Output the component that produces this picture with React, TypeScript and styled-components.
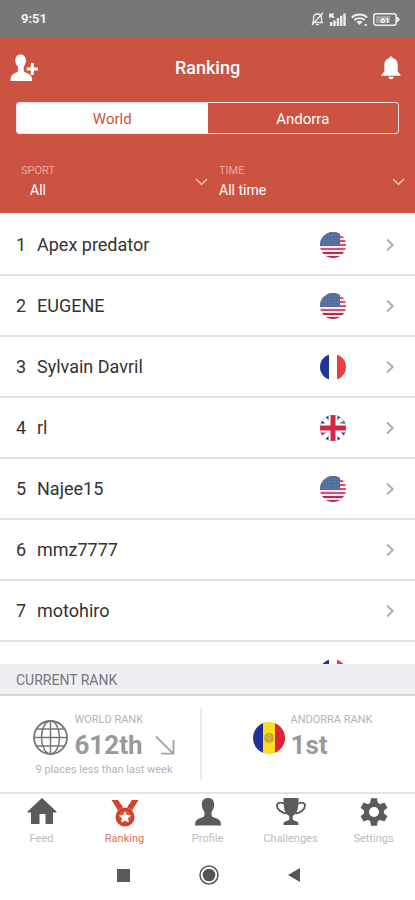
import React, { useState } from "react";
import styled, { createGlobalStyle } from "styled-components";

const RED = "#cc5341";

const GlobalStyle = createGlobalStyle`
  *, *::before, *::after { box-sizing: border-box; }
  body {
    margin: 0;
    background: #fff;
    font-family: Roboto, "Liberation Sans", sans-serif;
    color: #333;
  }
  button, select { font: inherit; color: inherit; border: 0; background: none; padding: 0; margin: 0; }
  svg { display: block; flex: none; }
`;

const Screen = styled.div`
  display: flex;
  flex-direction: column;
  height: 100vh;
  overflow: hidden;
`;

const StatusBar = styled.div`
  display: flex;
  align-items: center;
  justify-content: space-between;
  height: 38px;
  flex: none;
  padding: 0 15px 0 21px;
  background: #777;
  color: #f0f0f0;
`;

const Clock = styled.time`
  font-size: 13px;
  font-weight: 700;
  line-height: 16px;
`;

const StatusIcons = styled.div`
  display: flex;
  align-items: center;
  gap: 5px;
`;

const Header = styled.header`
  flex: none;
  background: ${RED};
  color: #fff;
`;

const TitleBar = styled.div`
  display: grid;
  grid-template-columns: 32px 1fr 32px;
  align-items: center;
  height: 64px;
  padding: 0 8px 4px;
`;

const Title = styled.h1`
  margin: 0;
  font-size: 18px;
  font-weight: 500;
  line-height: 24px;
  text-align: center;
`;

const IconButton = styled.button`
  display: flex;
  align-items: center;
  justify-content: center;
  height: 32px;
  cursor: pointer;
`;

const Segments = styled.div`
  display: grid;
  grid-template-columns: 1fr 1fr;
  height: 32px;
  margin: 0 16px;
  border: 1px solid #fbe4df;
  border-radius: 3px;
  overflow: hidden;
`;

const Segment = styled.button<{ $active: boolean }>`
  padding-top: 2px;
  font-size: 15px;
  line-height: 20px;
  background: ${(p) => (p.$active ? "#fff" : "transparent")};
  color: ${(p) => (p.$active ? RED : "#fff")};
  cursor: pointer;
`;

const Filters = styled.div`
  display: grid;
  grid-template-columns: 1fr 1fr;
  padding: 29px 10px 13px 21px;
`;

const Filter = styled.div`
  display: flex;
  align-items: center;
  justify-content: space-between;
  padding-right: 5px;

  & + & {
    padding-left: 6px;
    padding-right: 0;
  }
`;

const FilterField = styled.div`
  display: flex;
  flex-direction: column;
  flex: 1;
`;

const FilterLabel = styled.label`
  font-size: 11px;
  line-height: 16px;
  color: #eba99d;
`;

const FilterSelect = styled.select<{ $indented?: boolean }>`
  appearance: none;
  width: 100%;
  height: 21px;
  padding-left: ${(p) => (p.$indented ? 9 : 0)}px;
  font-size: 14px;
  line-height: 20px;
  color: #fff;
  cursor: pointer;
`;

const List = styled.ol`
  flex: 1;
  min-height: 0;
  margin: 0;
  padding: 2px 0 0;
  list-style: none;
  overflow: hidden;
`;

const Row = styled.li`
  height: 61px;
  border-bottom: 2px solid #e2e2e2;
`;

const RowButton = styled.button`
  display: grid;
  grid-template-columns: 21px 1fr 28px 47px;
  align-items: center;
  width: 100%;
  height: 100%;
  padding: 0 20px 0 16px;
  text-align: left;
  font-size: 18px;
  line-height: 24px;
  cursor: pointer;
`;

const RowArrow = styled.span`
  display: flex;
  justify-content: flex-end;
`;

const FlagDisc = styled.span<{ $size: number }>`
  display: block;
  flex: none;
  width: ${(p) => p.$size}px;
  height: ${(p) => p.$size}px;
  border-radius: 50%;
  overflow: hidden;
`;

const SectionTitle = styled.h2`
  flex: none;
  margin: 0;
  padding: 1px 16px 0;
  height: 32px;
  border-bottom: 2px solid #d6d5da;
  background: #efeef3;
  font-size: 14px;
  font-weight: 400;
  line-height: 31px;
  color: #77767b;
`;

const Ranks = styled.section`
  display: grid;
  grid-template-columns: 202fr 213fr;
  flex: none;
  height: 96px;
  padding: 12px 0;
`;

const RankCard = styled.div`
  display: flex;
  flex-direction: column;
  align-items: center;
  padding-left: 8px;

  &:first-child { border-right: 2px solid #ececec; }
`;

const RankBody = styled.div`
  display: flex;
  align-items: center;
  gap: 6px;
`;

const RankLabel = styled.div`
  font-size: 11px;
  line-height: 12px;
  padding-top: 6px;
  color: #b3b3b3;
`;

const RankValue = styled.div`
  display: flex;
  align-items: center;
  gap: 12px;
  font-size: 26px;
  font-weight: 700;
  line-height: 38px;
  color: #999;
`;

const RankIcon = styled.div`
  padding-top: 3px;
`;

const RankNote = styled.div`
  font-size: 11px;
  line-height: 12px;
  color: #b3b3b3;
`;

const TabBar = styled.nav`
  display: grid;
  grid-template-columns: repeat(5, 1fr);
  flex: none;
  height: 58px;
  border-top: 2px solid #e4e4e4;
`;

const Tab = styled.button<{ $active: boolean }>`
  display: flex;
  flex-direction: column;
  align-items: center;
  gap: 5px;
  padding-top: 3px;
  font-size: 11px;
  line-height: 14px;
  color: ${(p) => (p.$active ? "#d9735f" : "#bcbcbc")};
  cursor: pointer;
`;

const SystemBar = styled.div`
  display: flex;
  align-items: center;
  justify-content: center;
  gap: 61px;
  flex: none;
  height: 50px;
  padding-left: 2px;
`;

const SystemButton = styled.button`
  display: flex;
  align-items: center;
  justify-content: center;
  width: 24px;
  height: 24px;
  cursor: pointer;
`;

type Country = "us" | "fr" | "gb" | "ad";

function FlagArt({ country }: { country: Country }) {
  if (country === "us") {
    return (
      <svg width="100%" height="100%" viewBox="0 0 26 26" aria-label="United States">
        <rect width="26" height="26" fill="#f7e6ea" />
        {[0, 4, 8, 12, 16, 20, 24].map((y) => (
          <rect key={y} y={y} width="26" height="2" fill={y > 18 ? "#b82a50" : "#cf5472"} />
        ))}
        <rect width="20" height="14" fill="#4f6c9c" />
        {[3, 6, 9, 12].map((y) =>
          [3, 6, 9, 12, 15, 18].map((x) => (
            <circle key={`${x}-${y}`} cx={x} cy={y} r="0.5" fill="#8ea3c4" />
          ))
        )}
      </svg>
    );
  }
  if (country === "fr") {
    return (
      <svg width="100%" height="100%" viewBox="0 0 26 26" aria-label="France">
        <rect width="26" height="26" fill="#fff" />
        <rect width="9" height="26" fill="#1c3798" />
        <rect x="17" width="9" height="26" fill="#ee3d42" />
      </svg>
    );
  }
  if (country === "gb") {
    return (
      <svg width="100%" height="100%" viewBox="0 0 26 26" aria-label="United Kingdom">
        <rect width="26" height="26" fill="#1f3488" />
        <path d="M0 0L26 26M26 0L0 26" stroke="#fff" strokeWidth="5" />
        <path d="M26 5L18 10M0 21L8 16" stroke="#e0607a" strokeWidth="1.6" />
        <path d="M13 0V26M0 13H26" stroke="#fff" strokeWidth="9" />
        <path d="M13 0V26M0 13H26" stroke="#d22743" strokeWidth="5" />
      </svg>
    );
  }
  return (
    <svg width="100%" height="100%" viewBox="0 0 32 32" aria-label="Andorra">
      <rect width="32" height="32" fill="#fbdc20" />
      <rect width="10" height="32" fill="#1f2f9c" />
      <rect x="22" width="10" height="32" fill="#dc2341" />
      <circle cx="16" cy="16" r="5" fill="#cfa43c" />
      <path d="M16 12v8M12.400 16h7.200" stroke="#e0b53f" strokeWidth="1" />
    </svg>
  );
}

function Flag({ country, size = 26 }: { country: Country; size?: number }) {
  return (
    <FlagDisc $size={size}>
      <FlagArt country={country} />
    </FlagDisc>
  );
}

const AddPersonIcon = () => (
  <svg width="28" height="28" viewBox="0 0 28 28" fill="#fff" aria-hidden="true">
    <path d="M10.500 0.500c3.500 0 5.400 2.400 5.400 5.900c0 2.600-.9 4.700-2.100 6.100v4.200c0 1 .8 1.500 3 2.400c3.600 1.500 5.400 3.400 5.400 8H.5c0-4.600 1.200-6.500 4.600-8c2.200-.9 2.800-1.400 2.800-2.400v-4.200C6.500 11.100 5.300 9 5.300 6.400C5.300 2.900 7.200.5 10.500.5z" />
    <path d="M20.800 9h3v4.500H28v3h-4.200V21h-3v-4.500H16.800v-3h4z" />
  </svg>
);

const BellIcon = () => (
  <svg width="20" height="24" viewBox="0 0 20 24" fill="#fff" aria-hidden="true">
    <path d="M10 0.500c1 0 1.600.6 1.700 1.500c3.300.8 5 3.500 5 7v6.500l2.800 3.200v1H.5v-1l2.800-3.200V9c0-3.500 1.700-6.200 5-7C8.400 1.100 9 .5 10 .5z" />
    <path d="M7.500 20.800h5c0 1.500-1 2.500-2.500 2.500s-2.500-1-2.500-2.500z" />
  </svg>
);

const MutedIcon = () => (
  <svg width="13" height="14" viewBox="0 0 13 14" fill="none" stroke="#eee" strokeWidth="1.300" aria-hidden="true">
    <path d="M2.500 10V6c0-2.500 1.500-4 4-4s4 1.500 4 4v4M1 10.500h11M5 12.600h3M12 .8L1 13" />
  </svg>
);

const SignalIcon = () => (
  <svg width="17" height="13" viewBox="0 0 17 13" fill="#eee" aria-hidden="true">
    <path d="M1 9h2.400v4H1zM4.300 7.500h2.400V13H4.300zM7.700 5h2.400v8H7.700zM11 2.800h2.400V13H11zM14.300 .5h2.400V13h-2.400z" />
    <path d="M0 .5h5.500L3.800 2.200L5.500 4L4 5.500L2.200 3.800L.5 5.500z" />
  </svg>
);

const WifiIcon = () => (
  <svg width="17" height="13" viewBox="0 0 17 13" fill="none" stroke="#eee" strokeWidth="1.800" aria-hidden="true">
    <path d="M.8 4.500c4-4 11.400-4 15.400 0M3.300 7c2.800-2.600 7.600-2.600 10.400 0" />
    <path d="M5.500 8.800c1.700-1.400 4.300-1.400 6 0L8.500 12z" fill="#eee" stroke="none" />
    <path d="M13.500 12h2.500" />
  </svg>
);

const BatteryIcon = () => (
  <svg width="27" height="13" viewBox="0 0 27 13" aria-hidden="true">
    <rect x=".8" y=".8" width="22.400" height="11.400" rx="2.500" fill="none" stroke="#eee" strokeWidth="1.500" />
    <path d="M24.400 4l2 2.500l-2 2.500z" fill="#eee" stroke="#eee" />
    <rect x="3" y="3" width="14" height="7" fill="#a2a2a2" />
    <text x="12" y="9.500" fontSize="8" fontWeight="700" fill="#fff" textAnchor="middle">61</text>
  </svg>
);

const ChevronDown = () => (
  <svg width="13" height="8" viewBox="0 0 13 8" fill="none" stroke="#f2beb4" strokeWidth="1.600" aria-hidden="true">
    <path d="M1 1l5.500 5.300L12 1" />
  </svg>
);

const ChevronRight = () => (
  <svg width="10" height="14" viewBox="0 0 10 14" fill="none" stroke="#adadad" strokeWidth="1.900" aria-hidden="true">
    <path d="M2 1.500l5.700 5.500L2 12.500" />
  </svg>
);

const GlobeIcon = () => (
  <svg width="35" height="35" viewBox="0 0 35 35" fill="none" stroke="#777" strokeWidth="1.500" aria-hidden="true">
    <circle cx="17.500" cy="17.500" r="16.500" strokeWidth="1.800" />
    <ellipse cx="17.500" cy="17.500" rx="9" ry="16.500" />
    <path d="M17.500 1v33M1 17.500h33M4 9h27M4 26h27" />
  </svg>
);

const DownArrow = () => (
  <svg width="20" height="20" viewBox="0 0 20 20" fill="none" stroke="#a3a3a3" strokeWidth="1.800" aria-hidden="true">
    <path d="M1 1.500L18 18.300M18.500 5v13.700H6" />
  </svg>
);

const HomeIcon = () => (
  <svg width="30" height="30" viewBox="0 0 30 30" fill="#5b5b5d" aria-hidden="true">
    <path d="M15 1L29.500 14.500v1H26V27h-7.500V17h-6V27H4V15.500H.5v-1z" />
  </svg>
);

const MedalIcon = () => (
  <svg width="30" height="30" viewBox="0 0 30 30" aria-hidden="true">
    <path d="M1.500 3H8l5 7.200l-5 3.200zM28.500 3H22l-5 7.200l5 3.200z" fill="#d4452a" />
    <circle cx="15" cy="20" r="8" fill="#d9553b" stroke="#cf3f25" strokeWidth="3" />
    <path d="M15 14l1.900 3.900l4.200.5l-3.100 2.900l.8 4.200l-3.800-2.100l-3.800 2.100l.8-4.200l-3.100-2.900l4.200-.5z" fill="#fff" />
  </svg>
);

const ProfileIcon = () => (
  <svg width="30" height="30" viewBox="-1 -1 30 30" fill="#5b5b5d" aria-hidden="true">
    <path d="M14 0c4 0 6.200 2.600 6.200 6.600c0 3-1.100 5.500-2.600 7.200v3.400c0 1.200 1 1.700 3.400 2.600c4 1.500 6 2.800 6 7.700H1c0-4.900 2-6.200 6-7.700c2.400-.9 3.400-1.400 3.400-2.600v-3.400C8.900 12.100 7.800 9.600 7.800 6.600C7.800 2.600 10 0 14 0z" />
  </svg>
);

const TrophyIcon = () => (
  <svg width="30" height="30" viewBox="0 0 30 30" fill="#5b5b5d" aria-hidden="true">
    <path d="M7.500 1h15v2c0 9-1.500 13.500-5.800 16v3.500c1 1.500 5.800 1.500 5.800 4V28h-15v-1.500c0-2.500 4.800-2.500 5.800-4V19C9 16.500 7.500 12 7.500 3z" />
    <path d="M8 6.500C4.500 5 1 5.500 1 8.500c0 4 4.500 7.500 9.500 8M22 6.500c3.500-1.500 7-1 7 2c0 4-4.500 7.500-9.500 8" fill="none" stroke="#5b5b5d" strokeWidth="1.900" />
  </svg>
);

const GearIcon = () => (
  <svg width="30" height="30" viewBox="0 0 30 30" aria-hidden="true">
    <g fill="#5b5b5d">
      {[0, 60, 120].map((a) => (
        <path key={a} d="M12 1.200h6l.8 5v17.600l-.8 5h-6l-.8-5V6.200z" transform={`rotate(${a} 15 15)`} />
      ))}
      <circle cx="15" cy="15" r="10" />
    </g>
    <circle cx="15" cy="15" r="5" fill="#fff" />
  </svg>
);

const players: { rank?: number; name?: string; country?: Country }[] = [
  { rank: 1, name: "Apex predator", country: "us" },
  { rank: 2, name: "EUGENE", country: "us" },
  { rank: 3, name: "Sylvain Davril", country: "fr" },
  { rank: 4, name: "rl", country: "gb" },
  { rank: 5, name: "Najee15", country: "us" },
  { rank: 6, name: "mmz7777" },
  { rank: 7, name: "motohiro" },
  { country: "fr" },
];

const tabs = [
  { label: "Feed", Icon: HomeIcon },
  { label: "Ranking", Icon: MedalIcon },
  { label: "Profile", Icon: ProfileIcon },
  { label: "Challenges", Icon: TrophyIcon },
  { label: "Settings", Icon: GearIcon },
];

export default function App() {
  const [scope, setScope] = useState("World");
  const [tab, setTab] = useState("Ranking");

  return (
    <>
      <GlobalStyle />
      <Screen>
        <StatusBar>
          <Clock>9:51</Clock>
          <StatusIcons>
            <MutedIcon />
            <SignalIcon />
            <WifiIcon />
            <BatteryIcon />
          </StatusIcons>
        </StatusBar>

        <Header>
          <TitleBar>
            <IconButton aria-label="Add friend"><AddPersonIcon /></IconButton>
            <Title>Ranking</Title>
            <IconButton aria-label="Notifications"><BellIcon /></IconButton>
          </TitleBar>
          <Segments>
            {["World", "Andorra"].map((s) => (
              <Segment key={s} $active={s === scope} aria-pressed={s === scope} onClick={() => setScope(s)}>
                {s}
              </Segment>
            ))}
          </Segments>
          <Filters>
            <Filter>
              <FilterField>
                <FilterLabel htmlFor="sport">SPORT</FilterLabel>
                <FilterSelect id="sport" $indented><option>All</option></FilterSelect>
              </FilterField>
              <ChevronDown />
            </Filter>
            <Filter>
              <FilterField>
                <FilterLabel htmlFor="time">TIME</FilterLabel>
                <FilterSelect id="time"><option>All time</option></FilterSelect>
              </FilterField>
              <ChevronDown />
            </Filter>
          </Filters>
        </Header>

        <List>
          {players.map((p, i) => (
            <Row key={i}>
              <RowButton>
                <span>{p.rank}</span>
                <span>{p.name}</span>
                <span>{p.country && <Flag country={p.country} />}</span>
                <RowArrow><ChevronRight /></RowArrow>
              </RowButton>
            </Row>
          ))}
        </List>

        <SectionTitle>CURRENT RANK</SectionTitle>
        <Ranks>
          <RankCard>
            <RankBody>
              <RankIcon><GlobeIcon /></RankIcon>
              <div>
                <RankLabel>WORLD RANK</RankLabel>
                <RankValue>612th <DownArrow /></RankValue>
              </div>
            </RankBody>
            <RankNote>9 places less than last week</RankNote>
          </RankCard>
          <RankCard>
            <RankBody>
              <RankIcon><Flag country="ad" size={32} /></RankIcon>
              <div>
                <RankLabel>ANDORRA RANK</RankLabel>
                <RankValue>1st</RankValue>
              </div>
            </RankBody>
          </RankCard>
        </Ranks>

        <TabBar>
          {tabs.map(({ label, Icon }) => (
            <Tab key={label} $active={label === tab} onClick={() => setTab(label)}>
              <Icon />
              {label}
            </Tab>
          ))}
        </TabBar>

        <SystemBar>
          <SystemButton aria-label="Recent apps">
            <svg width="13" height="13" viewBox="0 0 13 13"><rect width="13" height="13" fill="#5a5a5a" /></svg>
          </SystemButton>
          <SystemButton aria-label="Home">
            <svg width="20" height="20" viewBox="0 0 20 20">
              <circle cx="10" cy="10" r="9" fill="none" stroke="#5a5a5a" strokeWidth="1.500" />
              <circle cx="10" cy="10" r="6.300" fill="#555" />
            </svg>
          </SystemButton>
          <SystemButton aria-label="Back">
            <svg width="12" height="14" viewBox="0 0 12 14"><path d="M12 0v14L0 7z" fill="#555" /></svg>
          </SystemButton>
        </SystemBar>
      </Screen>
    </>
  );
}
